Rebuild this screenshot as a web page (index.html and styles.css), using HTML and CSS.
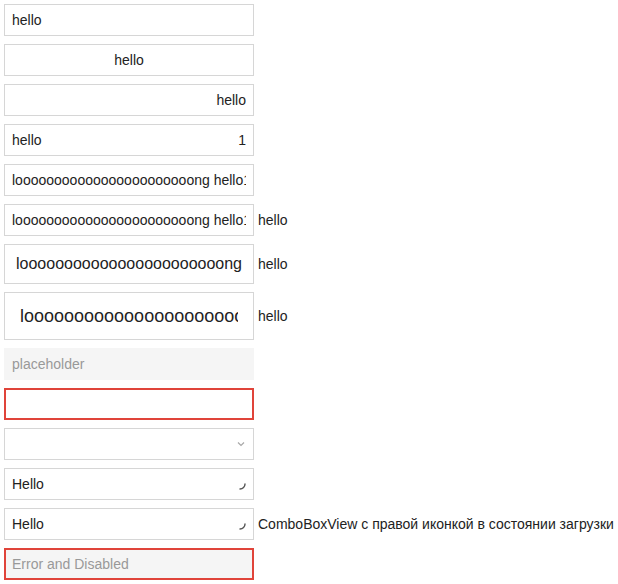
FILE: index.html
```html
<!DOCTYPE html>
<html>
<head>
<meta charset="utf-8">
<link rel="stylesheet" href="styles.css">
</head>
<body>
<div class="list">
  <div class="row"><div class="field"><span class="text">hello</span></div></div>
  <div class="row"><div class="field center"><span class="text">hello</span></div></div>
  <div class="row"><div class="field right"><span class="text">hello</span></div></div>
  <div class="row"><div class="field split"><span class="text">hello</span><span class="suffix">1</span></div></div>
  <div class="row"><div class="field"><span class="text">looooooooooooooooooooooong hello1</span></div></div>
  <div class="row"><div class="field"><span class="text">looooooooooooooooooooooong hello1</span></div><span class="label">hello</span></div>
  <div class="row"><div class="field size-m"><span class="text">looooooooooooooooooooooong hello1</span></div><span class="label">hello</span></div>
  <div class="row"><div class="field size-l"><span class="text">looooooooooooooooooooooong hello1</span></div><span class="label">hello</span></div>
  <div class="row"><div class="field disabled"><span class="text placeholder">placeholder</span></div></div>
  <div class="row"><div class="field error"><span class="text"></span></div></div>
  <div class="row"><div class="field split"><span class="text"></span>
    <svg class="icon" width="10" height="10" viewBox="0 0 10 10"><path d="M2 3.5 L5 6.5 L8 3.5" fill="none" stroke="#a8a8a8" stroke-width="1.2"/></svg></div></div>
  <div class="row"><div class="field split"><span class="text">Hello</span>
    <svg class="icon spin" width="12" height="12" viewBox="0 0 12 12"><path d="M10 4 A5 5 0 0 1 5 9" fill="none" stroke="#555" stroke-width="1.4" stroke-linecap="round"/></svg></div></div>
  <div class="row"><div class="field split"><span class="text">Hello</span>
    <svg class="icon spin" width="12" height="12" viewBox="0 0 12 12"><path d="M10 4 A5 5 0 0 1 5 9" fill="none" stroke="#555" stroke-width="1.4" stroke-linecap="round"/></svg></div><span class="label">ComboBoxView с правой иконкой в состоянии загрузки</span></div>
  <div class="row"><div class="field disabled error"><span class="text placeholder">Error and Disabled</span></div></div>
</div>
</body>
</html>
```
FILE: styles.css
```css
html, body {
  margin: 0;
  padding: 0;
  background: #fff;
}
body {
  padding: 4px;
  font-family: "Liberation Sans", Arial, sans-serif;
  font-size: 14px;
  color: #222;
}
.list {
  display: flex;
  flex-direction: column;
  gap: 8px;
}
.row {
  display: flex;
  align-items: center;
  gap: 4px;
}
.field {
  box-sizing: border-box;
  width: 250px;
  height: 32px;
  border: 1px solid #d6d6d6;
  background: #fff;
  padding: 0 7px;
  display: flex;
  align-items: center;
  overflow: hidden;
  flex: none;
}
.text {
  flex: 1;
  white-space: nowrap;
  overflow: hidden;
  min-width: 0;
}
.center .text { text-align: center; }
.right .text { text-align: right; }
.split { justify-content: space-between; }
.suffix { flex: none; }
.size-m {
  height: 40px;
  font-size: 16px;
  padding: 0 11px;
}
.size-l {
  height: 48px;
  font-size: 18px;
  padding: 0 15px;
}
.disabled {
  background: #f5f5f5;
  border-color: #f5f5f5;
}
.placeholder { color: #999; }
.error {
  border: 2px solid #e0443a;
  padding: 0 6px;
}
.icon { flex: none; }
.spin { margin-right: -1px; margin-top: 4px; }
.label { white-space: nowrap; }
```
